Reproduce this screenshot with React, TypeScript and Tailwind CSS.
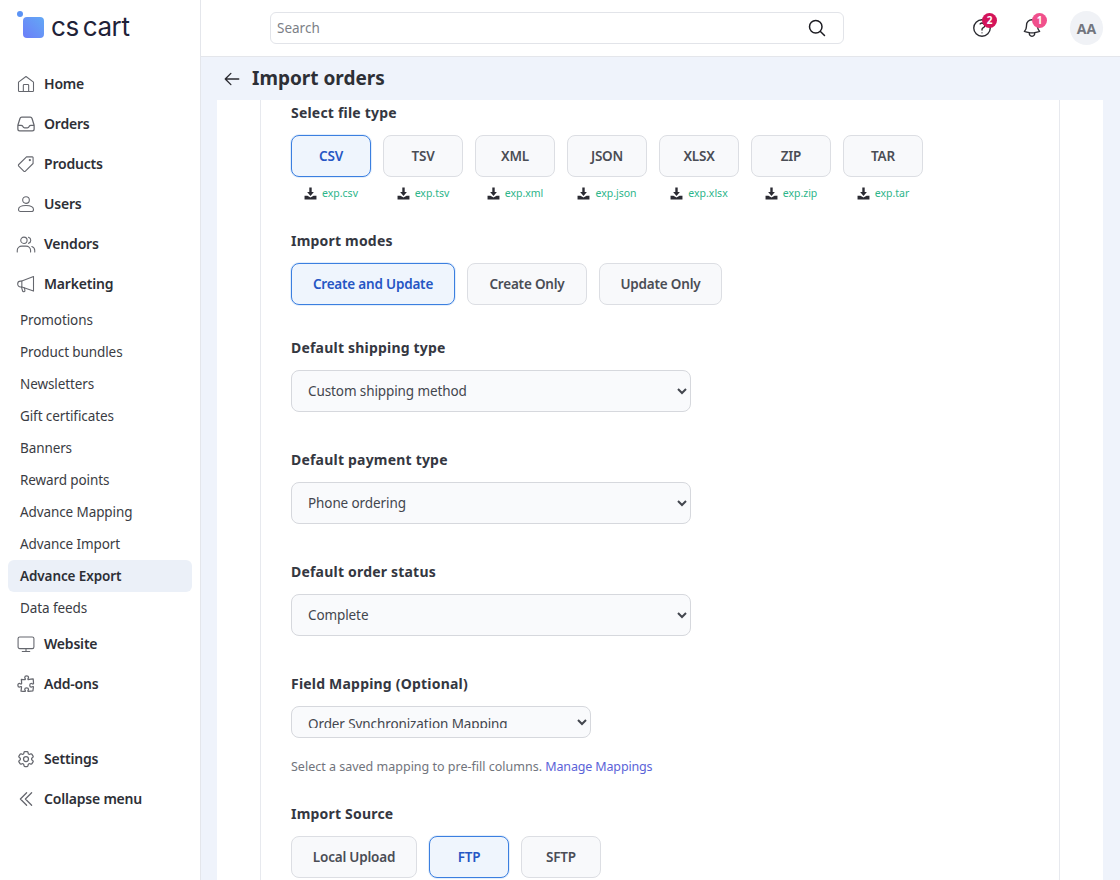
import { HiOutlineInbox, HiOutlinePuzzlePiece, HiOutlineCog6Tooth, HiOutlineChevronDoubleLeft, HiOutlineBell, HiOutlineQuestionMarkCircle, HiOutlineMagnifyingGlass, HiOutlineArrowLeft } from "react-icons/hi2";

const FONT = '"Noto Sans", "Open Sans", sans-serif';

/* ─────────── icons ─────────── */
const Line = ({ children }: { children: React.ReactNode }) => (
  <svg viewBox="0 0 24 24" className="h-5 w-5" fill="none" stroke="currentColor" strokeWidth={1.3} strokeLinecap="round" strokeLinejoin="round">
    {children}
  </svg>
);
const HomeIcon = () => (
  <Line>
    <path d="M3 9.800 12 3l9 6.800V20a1 1 0 0 1-1 1H4a1 1 0 0 1-1-1z" />
    <path d="M8.800 21v-7.500a1 1 0 0 1 1-1h4.400a1 1 0 0 1 1 1V21" />
  </Line>
);
const TagIcon = () => (
  <Line>
    <path d="M20.500 4.200v7.200L11.300 20.600a1.400 1.400 0 0 1-2 0l-6-6a1.400 1.400 0 0 1 0-2L12.600 3.400h7.100a.8.8 0 0 1 .8.8z" />
    <circle cx="16.600" cy="7.200" r=".7" fill="currentColor" />
  </Line>
);
const UserIcon = () => (
  <Line>
    <circle cx="12" cy="7.200" r="4" />
    <path d="M3 18.500c0-3.200 3.400-4.800 9-4.800s9 1.600 9 4.800c0 1.500-.9 2.500-2.400 2.500H5.400C3.900 21 3 20 3 18.500z" />
  </Line>
);
const VendorsIcon = () => (
  <Line>
    <circle cx="9.500" cy="7.500" r="3.800" />
    <path d="M1.500 21.500v-1.800c0-3 2.500-5.200 5.500-5.200h5c3 0 5.500 2.200 5.500 5.200v1.800" />
    <path d="M15 3.900a3.800 3.800 0 0 1 0 7.300M19 15c2 .8 3.500 2.500 3.500 4.700v1.800" />
  </Line>
);
const MegaphoneIcon = () => (
  <Line>
    <path d="M21 3v17.500L7 15.500H5.500a3.500 3.500 0 0 1 0-7H7z" />
    <path d="M7 8.500v7M6.500 15.500l1.300 4.600a1.500 1.500 0 0 0 2.900-.8l-.8-2.700" />
  </Line>
);
const MonitorIcon = () => (
  <Line>
    <rect x="2.500" y="3.500" width="19" height="14" rx="2" />
    <path d="M12 17.500v3.500M7.500 21h9" />
  </Line>
);
const DownloadIcon = () => (
  <svg viewBox="0 0 12 12" className="h-[13px] w-[13px] text-[#2b2b33]" fill="currentColor">
    <path d="M4.900 .4h2.200v4.300h2L6 8.400 2.900 4.700h2z" />
    <path d="M.5 8h2.700L6 9.700 8.800 8h2.700v3.600H.5z" />
  </svg>
);

/* ─────────── sidebar ─────────── */
const MENU = [
  { label: "Home", icon: <HomeIcon /> },
  { label: "Orders", icon: <HiOutlineInbox className="h-5 w-5" /> },
  { label: "Products", icon: <TagIcon /> },
  { label: "Users", icon: <UserIcon /> },
  { label: "Vendors", icon: <VendorsIcon /> },
  { label: "Marketing", icon: <MegaphoneIcon /> },
];
const MARKETING = ["Promotions", "Product bundles", "Newsletters", "Gift certificates", "Banners", "Reward points", "Advance Mapping", "Advance Import", "Advance Export", "Data feeds"];

function NavRow({ label, icon }: { label: string; icon: React.ReactNode }) {
  return (
    <div className="flex h-10 items-center gap-2 pl-4 text-[14px] font-semibold tracking-[-0.2px] text-[#2d2f36]">
      <span className="text-[#65676e]">{icon}</span>
      <span className="pb-[2px]">{label}</span>
    </div>
  );
}

function Sidebar() {
  return (
    <aside className="flex w-[201px] shrink-0 flex-col border-r border-[#e4e6eb] bg-white">
      <div className="flex h-[64px] items-start pl-[17px] pt-[12px]">
        <div className="relative mt-[5px] h-[21px] w-[21px] translate-x-[6px] rounded-[4px] bg-gradient-to-tr from-[#6b7df8] to-[#62a8f5]">
          <span className="absolute -left-[6px] -top-[6px] h-[6px] w-[6px] rounded-full bg-[#5b93f5]" />
        </div>
        <span className="ml-[13px] text-[26px] font-normal leading-[30px] tracking-[-0.4px] text-[#1f2238] [word-spacing:-3px]" style={{ fontFamily: "Inter, sans-serif" }}>cs cart</span>
      </div>
      {MENU.map((m) => <NavRow key={m.label} {...m} />)}
      <div className="flex flex-col">
        {MARKETING.map((s) => (
          <div key={s} className={`mx-2 flex h-8 items-center rounded-[6px] px-3 text-[13.5px] tracking-[-0.1px] ${s === "Advance Export" ? "bg-[#ebf0f8] font-semibold text-[#2d2f36]" : "text-[#3a3c43]"}`}>{s}</div>
        ))}
      </div>
      <NavRow label="Website" icon={<MonitorIcon />} />
      <NavRow label="Add-ons" icon={<HiOutlinePuzzlePiece className="h-5 w-5" />} />
      <div className="h-[35px]" />
      <NavRow label="Settings" icon={<HiOutlineCog6Tooth className="h-5 w-5" />} />
      <NavRow label="Collapse menu" icon={<HiOutlineChevronDoubleLeft className="h-5 w-5" />} />
    </aside>
  );
}

/* ─────────── header ─────────── */
function Header() {
  return (
    <header className="flex h-[57px] shrink-0 items-center border-b border-[#e4e6eb] bg-white pl-[69px] pr-[17px]">
      <div className="flex h-8 w-[574px] items-center justify-between rounded-[6px] border border-[#e2e4e9] pl-[6px] pr-[16px]">
        <span className="text-[13.5px] text-[#7c7f87]">Search</span>
        <HiOutlineMagnifyingGlass className="h-5 w-5 text-[#1c1c22]" strokeWidth={1.8} />
      </div>
      <div className="ml-auto flex items-center">
        <div className="relative">
          <HiOutlineQuestionMarkCircle className="h-[22px] w-[22px] text-[#2a2a30]" />
          <span className="absolute -right-[4px] -top-[4px] flex h-[15px] w-[15px] items-center justify-center rounded-full bg-[#d3145a] text-[10px] font-bold text-white">2</span>
        </div>
        <div className="relative ml-[28px]">
          <HiOutlineBell className="h-[22px] w-[22px] text-[#2a2a30]" />
          <span className="absolute -right-[4px] -top-[4px] flex h-[15px] w-[15px] items-center justify-center rounded-full bg-[#f0508c] text-[10px] font-bold text-white">1</span>
        </div>
        <div className="ml-[27px] flex h-[34px] w-[33px] items-center justify-center rounded-full bg-[#f0f2f6] text-[14px] font-bold text-[#73767e]">AA</div>
      </div>
    </header>
  );
}

/* ─────────── form ─────────── */
function OptionButton({ label, active, w }: { label: string; active?: boolean; w: string }) {
  return (
    <div className={`flex h-[42px] items-center justify-center rounded-[8px] border text-[13.5px] font-semibold tracking-[-0.2px] ${w} ${active ? "border-[#3b7fe0] bg-[#eff5fd] text-[#2556c4] shadow-[0_0_0_1px_#e3eefb]" : "border-[#dcdee3] bg-[#f8f9fb] text-[#4a4d55]"}`}>
      {label}
    </div>
  );
}

function Label({ children }: { children: React.ReactNode }) {
  return <div className="text-[14px] font-bold leading-5 tracking-[0.2px] text-[#343741]">{children}</div>;
}

function SelectField({ label, value }: { label: string; value: string }) {
  return (
    <div>
      <Label>{label}</Label>
      <select defaultValue={value} className="mt-3 block h-[42px] w-[400px] rounded-[8px] border border-[#d6d8dd] bg-[#f9fafc] px-3 text-[13.5px] tracking-[-0.1px] text-[#43464e]" style={{ fontFamily: FONT }}>
        <option>{value}</option>
      </select>
    </div>
  );
}

const FILE_TYPES = ["CSV", "TSV", "XML", "JSON", "XLSX", "ZIP", "TAR"];

function ImportForm() {
  return (
    <div className="h-full border-x border-[#e7e9ee] pl-[30px] pt-[3px]">
      <Label>Select file type</Label>
      <div className="mt-3 flex gap-3">
        {FILE_TYPES.map((t, i) => (
          <div key={t} className="flex w-20 flex-col items-center">
            <OptionButton label={t} active={i === 0} w="w-20" />
            <div className="mt-2 flex items-center gap-[5px]">
              <DownloadIcon />
              <span className="text-[10.5px] leading-4 text-[#2db58a]">exp.{t.toLowerCase()}</span>
            </div>
          </div>
        ))}
      </div>
      <div className="mt-[30px]"><Label>Import modes</Label></div>
      <div className="mt-3 flex gap-3">
        <OptionButton label="Create and Update" active w="w-[164px]" />
        <OptionButton label="Create Only" w="w-[120px]" />
        <OptionButton label="Update Only" w="w-[123px]" />
      </div>
      <div className="mt-[33px] flex flex-col gap-[38px]">
        <SelectField label="Default shipping type" value="Custom shipping method" />
        <SelectField label="Default payment type" value="Phone ordering" />
        <SelectField label="Default order status" value="Complete" />
      </div>
      <div className="mt-[38px]"><Label>Field Mapping (Optional)</Label></div>
      <select className="mt-3 block h-[32px] w-[300px] rounded-[8px] border border-[#d6d8dd] bg-[#f9fafc] px-3 pb-[9px] pt-[7px] text-[13.5px] tracking-[-0.1px] text-[#43464e]" style={{ fontFamily: FONT }}>
        <option>Order Synchronization Mapping</option>
      </select>
      <div className="mt-[19px] text-[12.5px] leading-5 text-[#71747c]">
        Select a saved mapping to pre-fill columns. <span className="tracking-[-0.15px] text-[#5b63d8]">Manage Mappings</span>
      </div>
      <div className="mt-[27px]"><Label>Import Source</Label></div>
      <div className="mt-3 flex gap-3">
        <OptionButton label="Local Upload" w="w-[126px]" />
        <OptionButton label="FTP" active w="w-20" />
        <OptionButton label="SFTP" w="w-20" />
      </div>
    </div>
  );
}

export default function App() {
  return (
    <div className="flex h-[880px] w-[1120px] overflow-hidden bg-white" style={{ fontFamily: FONT }}>
      <Sidebar />
      <main className="flex min-w-0 flex-1 flex-col">
        <Header />
        <div className="flex min-h-0 flex-1 flex-col bg-[#eff3fb]">
          <div className="flex h-[43px] shrink-0 items-center gap-[11px] pl-[22px]">
            <HiOutlineArrowLeft className="h-[18px] w-[18px] text-[#2a2a30]" strokeWidth={1.8} />
            <h1 className="pb-[2px] text-[19px] font-bold leading-6 text-[#2d2f36]">Import orders</h1>
          </div>
          <div className="ml-4 mr-[17px] min-h-0 flex-1 overflow-hidden bg-white px-[43px]">
            <ImportForm />
          </div>
        </div>
      </main>
    </div>
  );
}
